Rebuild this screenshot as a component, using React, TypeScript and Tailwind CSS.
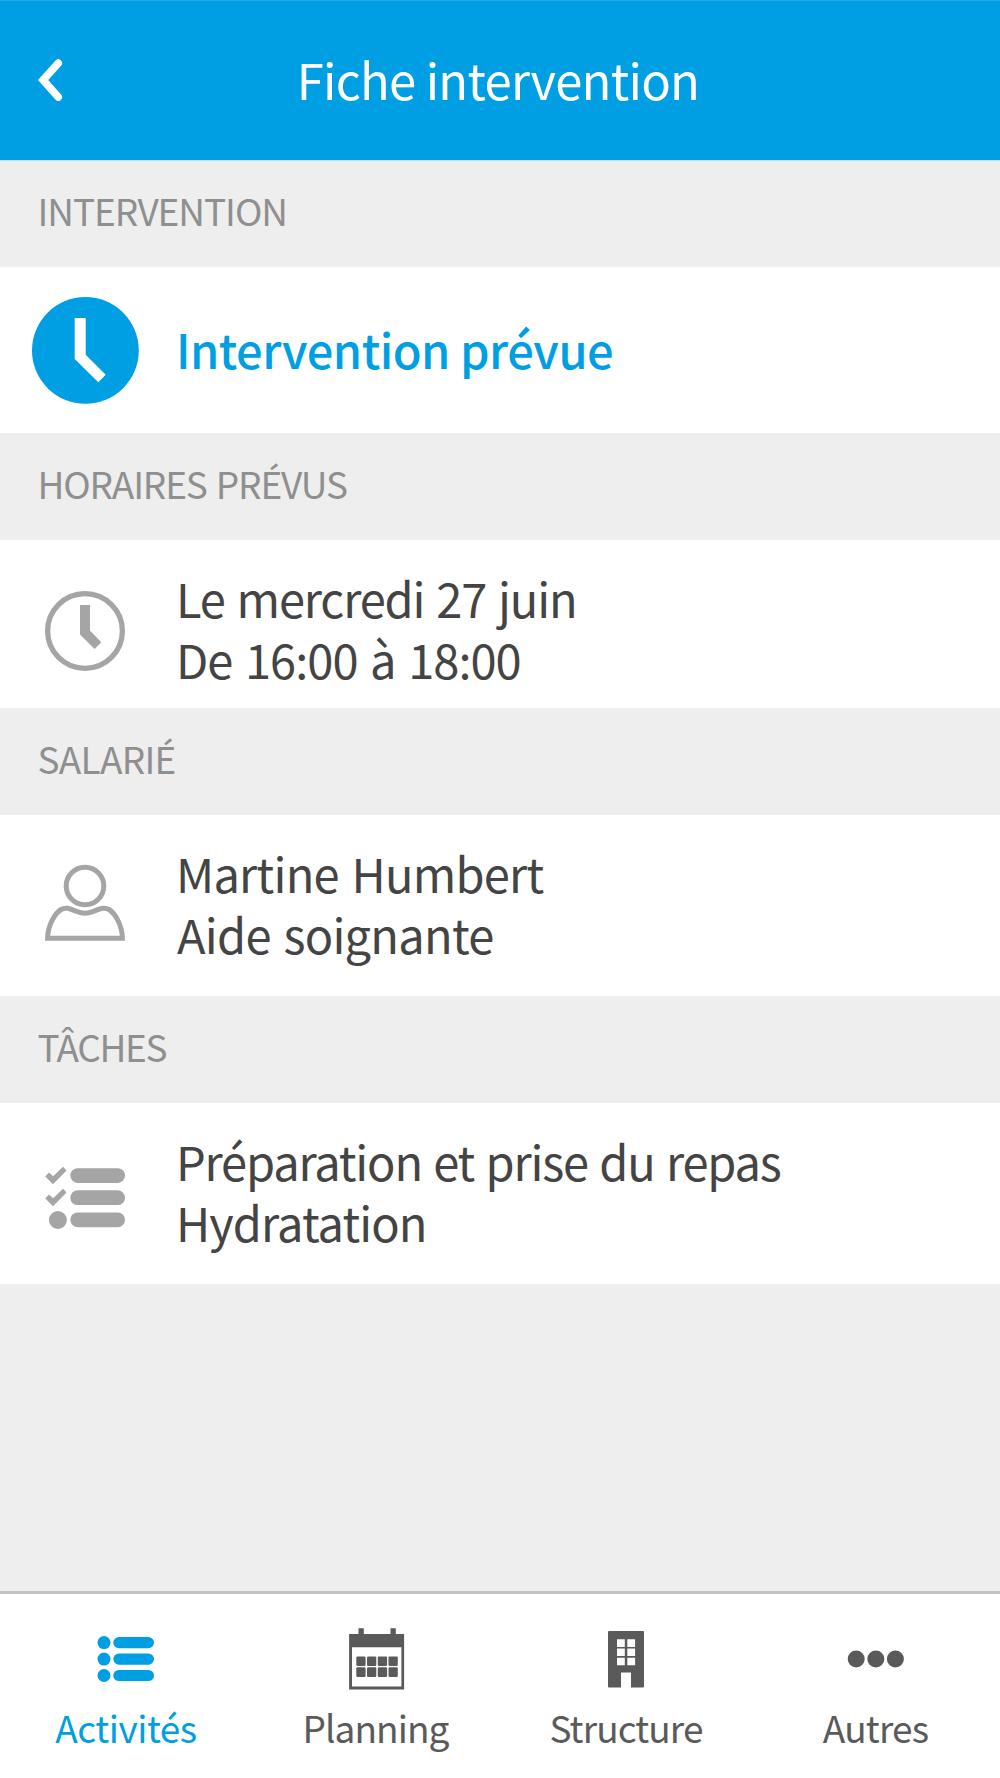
import type { ReactNode } from 'react';

function SectionTitle({ children }: { children: ReactNode }) {
  return (
    <h2 className="flex h-[107px] items-center pb-2 pl-[37.5px] text-[37px] leading-[60px] font-normal text-[#8f8f8f]">
      {children}
    </h2>
  );
}

function Row({ className, icon, children }: { className: string; icon: ReactNode; children: ReactNode }) {
  return (
    <div className={`flex bg-white text-[47px] leading-[61px] text-[#444444] ${className}`}>
      <div className="flex w-[176px] shrink-0">{icon}</div>
      <div>{children}</div>
    </div>
  );
}

function BackIcon() {
  return (
    <svg className="h-[44px] w-[28px]" viewBox="36 58 28 44" fill="none" stroke="currentColor" strokeWidth="7.7" strokeLinecap="round">
      <path d="M58.2 63.2 43.1 80l15.1 17" />
    </svg>
  );
}

function StatusClockIcon() {
  return (
    <svg className="mt-[30px] ml-8 h-[107px] w-[107px]" viewBox="32 297 107 107">
      <circle cx="85.4" cy="350.4" r="53.4" fill="#009fe3" />
      <path d="M74.7 318h11v36.7l20 20-7.4 7.6L74.7 359z" fill="#fff" />
    </svg>
  );
}

function ClockIcon() {
  return (
    <svg className="mt-[50px] ml-[44px] h-[82px] w-[82px]" viewBox="44 590 82 82">
      <circle cx="85" cy="631" r="37.4" fill="none" stroke="#a5a5a5" strokeWidth="5.3" />
      <path d="M80 605h10v25.7l11.3 11.6-6.6 6.7L80 634.5z" fill="#a5a5a5" />
    </svg>
  );
}

function PersonIcon() {
  return (
    <svg className="mt-[49px] ml-[44px] h-[78px] w-[82px]" viewBox="44 864 82 78" fill="none" stroke="#a5a5a5" strokeWidth="5">
      <circle cx="85" cy="886" r="18.8" />
      <path d="M47.6 938.2C47.8 926 54.5 913.5 61 909.5C69 905 75 913.2 85 913.2C95 913.2 101 905 109 909.5C115.5 913.5 122.2 926 122.4 938.2Z" />
    </svg>
  );
}

function TasksIcon() {
  return (
    <svg className="mt-[62px] ml-[44px] h-[66px] w-[82px]" viewBox="44 1165 82 66" fill="#a5a5a5">
      <path d="m45.3 1176.5 3.7-4 4.2 3.7 9.8-9.4 3.5 3.8L53 1184.2z" />
      <path d="m45.3 1198.5 3.7-4 4.2 3.7 9.8-9.4 3.5 3.8L53 1206.2z" />
      <circle cx="57.9" cy="1220" r="9" />
      <rect x="70.3" y="1168.2" width="54.7" height="14.8" rx="7.4" />
      <rect x="70.3" y="1190.3" width="54.7" height="14.8" rx="7.4" />
      <rect x="70.3" y="1212.4" width="54.7" height="14.8" rx="7.4" />
    </svg>
  );
}

function ListIcon() {
  return (
    <svg className="h-[64px] w-[60px]" viewBox="96 1627 60 64" fill="currentColor">
      <circle cx="104" cy="1642.6" r="6.5" />
      <circle cx="104" cy="1659.1" r="6.5" />
      <circle cx="104" cy="1675.5" r="6.5" />
      <rect x="113.3" y="1637" width="40.7" height="11.2" rx="5.6" />
      <rect x="113.3" y="1653.5" width="40.7" height="11.2" rx="5.6" />
      <rect x="113.3" y="1669.9" width="40.7" height="11.2" rx="5.6" />
    </svg>
  );
}

function CalendarIcon() {
  return (
    <svg className="h-[64px] w-[60px]" viewBox="346 1627 60 64" fill="currentColor">
      <path d="M358.5 1628.3h5.3v5.7h26.7v-5.7h5.3v5.7h8.3v55.6h-55v-55.6h9.4zM352 1647.2v39.3h49.4v-39.3z" fillRule="evenodd" />
      {[356.3, 367, 377.8, 388.5].map((x) => (
        <g key={x}>
          <rect x={x} y="1656.5" width="9.3" height="9.5" rx="1.3" />
          <rect x={x} y="1667.3" width="9.3" height="9.7" rx="1.3" />
        </g>
      ))}
    </svg>
  );
}

function BuildingIcon() {
  return (
    <svg className="h-[64px] w-[60px]" viewBox="596 1627 60 64" fill="currentColor">
      <path
        fillRule="evenodd"
        d="M609 1631h34q1 0 1 1v54.5q0 1-1 1h-12v-15h-10v15h-12q-1 0-1-1v-54.5q0-1 1-1zM617 1639.3v7.7h7.8v-7.7zM627.3 1639.3v7.7h7.8v-7.7zM617 1648.5v7.5h7.8v-7.5zM627.3 1648.5v7.5h7.8v-7.5zM617 1657.8v7.5h7.8v-7.5zM627.3 1657.8v7.5h7.8v-7.5z"
      />
    </svg>
  );
}

function MoreIcon() {
  return (
    <svg className="h-[64px] w-[60px]" viewBox="846 1627 60 64" fill="currentColor">
      <circle cx="856.2" cy="1659" r="8.5" />
      <circle cx="875.8" cy="1659" r="8.5" />
      <circle cx="895.4" cy="1659" r="8.5" />
    </svg>
  );
}

const tabs = [
  { label: 'Activités', icon: <ListIcon />, className: 'w-[252px] text-[#009fe3]', text: 'tracking-[-0.48px]' },
  { label: 'Planning', icon: <CalendarIcon />, className: 'w-[248px]', text: 'tracking-[-0.95px] pr-px' },
  { label: 'Structure', icon: <BuildingIcon />, className: 'w-[252px]', text: 'tracking-[-0.9px]' },
  { label: 'Autres', icon: <MoreIcon />, className: 'w-[248px]', text: 'tracking-[-0.85px] pr-px' },
];

export default function App() {
  return (
    <div className="flex h-[1778px] w-[1000px] flex-col overflow-hidden bg-[#eeeeee] font-['Noto_Sans_CJK_SC','Noto_Sans',sans-serif]">
      <header className="grid h-[160px] shrink-0 grid-cols-[100px_1fr_100px] items-center border-t border-[#20aae5] bg-[#009fe3] text-white shadow-[0_1px_0_#bfe2f1]">
        <button className="flex pb-[1px] pl-9" aria-label="Retour">
          <BackIcon />
        </button>
        <h1 className="pr-1 pb-1 text-center text-[49px] leading-[70px] font-normal tracking-[-0.75px]">Fiche intervention</h1>
      </header>

      <main className="grow">
        <SectionTitle><span className="tracking-[-1.07px]">INTERVENTION</span></SectionTitle>
        <Row className="h-[166px]" icon={<StatusClockIcon />}>
          <p className="pt-[51px] font-medium tracking-[-0.52px] text-[#009fe3]">Intervention prévue</p>
        </Row>

        <SectionTitle><span className="tracking-[-1.15px] [word-spacing:2px]">HORAIRES PRÉVUS</span></SectionTitle>
        <Row className="h-[168px]" icon={<ClockIcon />}>
          <p className="pt-[27px] tracking-[-1.17px] [word-spacing:2.6px]">Le mercredi 27 juin</p>
          <p className="tracking-[-0.97px] [word-spacing:3px]">De 16:00 à 18:00</p>
        </Row>

        <SectionTitle><span className="tracking-[-0.75px]">SALARIÉ</span></SectionTitle>
        <Row className="h-[181px]" icon={<PersonIcon />}>
          <p className="pt-[27px] tracking-[-0.77px] [word-spacing:3px]">Martine Humbert</p>
          <p className="pl-px tracking-[-0.75px] [word-spacing:3px]">Aide soignante</p>
        </Row>

        <SectionTitle><span className="tracking-[-1.4px]">TÂCHES</span></SectionTitle>
        <Row className="h-[181px]" icon={<TasksIcon />}>
          <p className="pt-[27px] tracking-[-1.18px] [word-spacing:2px]">Préparation et prise du repas</p>
          <p className="tracking-[-0.9px]">Hydratation</p>
        </Row>
      </main>

      <nav className="flex h-[187px] shrink-0 border-t-[3px] border-[#c3c3c3] bg-white text-[#5a5a5a]">
        {tabs.map((tab) => (
          <button key={tab.label} className={`flex shrink-0 flex-col items-center pt-[33px] ${tab.className}`}>
            {tab.icon}
            <span className={`mt-3 text-[37px] leading-[48px] ${tab.text}`}>{tab.label}</span>
          </button>
        ))}
      </nav>
    </div>
  );
}
